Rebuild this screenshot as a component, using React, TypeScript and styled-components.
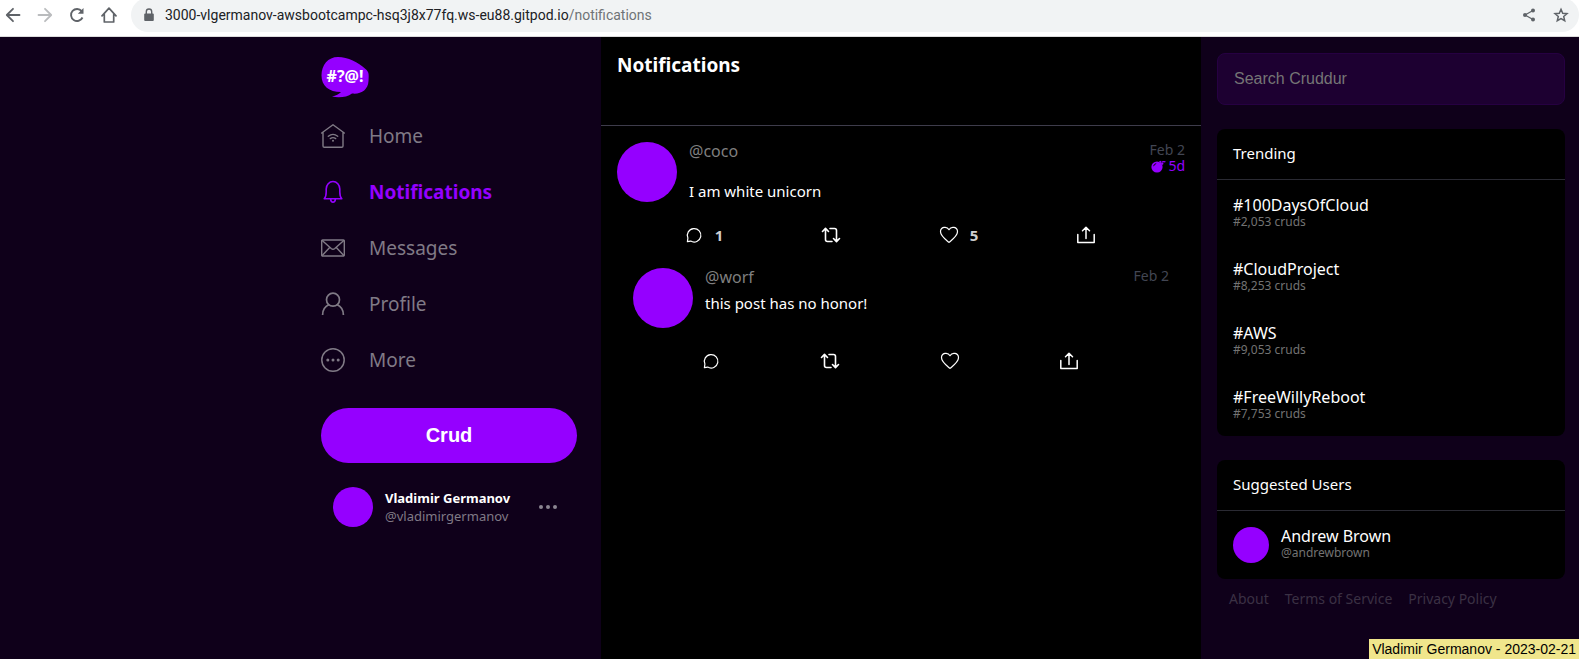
import React from 'react';
import styled, { createGlobalStyle, css } from 'styled-components';

const GlobalStyle = createGlobalStyle`
  * { box-sizing: border-box; }
  html, body, #root { height: 100%; }
  body {
    margin: 0;
    background: #000;
    color: #fff;
    font-family: 'Noto Sans', 'Open Sans', sans-serif;
    font-size: 15px;
  }
  button, input { font-family: 'Liberation Sans', Arial, sans-serif; }
  a { color: inherit; text-decoration: none; }
`;

const purple = '#9500ff';

const Window = styled.div`
  min-height: 100%;
  display: flex;
  flex-direction: column;
`;

/* Browser bar */
const BrowserBar = styled.header`
  display: flex;
  align-items: flex-start;
  height: 37px;
  overflow: hidden;
  background: #fff;
  border-bottom: 1px solid #dcdcdc;
`;

const BrowserButtons = styled.div`
  display: flex;
  align-items: center;
  gap: 16px;
  height: 30px;
  padding: 0 14px 0 5px;
`;

const IconButton = styled.button<{ $color?: string }>`
  display: flex;
  padding: 0;
  border: 0;
  background: none;
  cursor: pointer;
  color: ${p => p.$color ?? '#5f6368'};
`;

const AddressBar = styled.div`
  flex: 1;
  display: flex;
  align-items: center;
  height: 34px;
  margin-top: -2px;
  padding: 0 10px;
  border-radius: 17px;
  background: #f1f3f4;
`;

const Address = styled.div`
  flex: 1;
  padding-left: 8px;
  font-family: Roboto, 'Noto Sans', sans-serif;
  font-size: 14px;
  line-height: 20px;
  color: #202124;
  span { color: #6f7377; }
`;

const AddressActions = styled.div`
  display: flex;
  gap: 16px;
`;

/* Page frame */
const Page = styled.div`
  flex: 1;
  display: grid;
  grid-template-columns: minmax(300px, 1fr) 600px minmax(300px, 378px);
`;

const Sidebar = styled.aside`
  background: #0f001a;
  padding: 0 24px;
  display: flex;
  flex-direction: column;
  align-items: flex-end;
`;

const SidebarInner = styled.div`
  width: 256px;
  padding-top: 20px;
`;

const NavList = styled.nav`
  display: flex;
  flex-direction: column;
  padding-top: 6px;
`;

const NavLink = styled.a<{ $active?: boolean }>`
  display: flex;
  align-items: center;
  gap: 24px;
  height: 56px;
  font-size: 19px;
  color: #807a86;
  ${p => p.$active && css`
    color: ${purple};
    font-weight: 700;
  `}
`;

const CrudButton = styled.button`
  width: 100%;
  height: 55px;
  margin-top: 20px;
  border: 0;
  border-radius: 28px;
  background: ${purple};
  color: #fff;
  font-size: 20px;
  font-weight: 700;
  cursor: pointer;
`;

const Avatar = styled.div<{ $size: number }>`
  flex: none;
  width: ${p => p.$size}px;
  height: ${p => p.$size}px;
  border-radius: 50%;
  background: ${purple};
`;

const Account = styled.div`
  display: flex;
  align-items: center;
  gap: 12px;
  margin-top: 12px;
  padding: 12px 20px 12px 12px;
`;

const AccountText = styled.div`
  flex: 1;
  font-size: 13px;
  line-height: 18px;
  white-space: nowrap;
  color: #807a86;
`;

const AccountName = styled.div`
  font-weight: 700;
  color: #fff;
`;

/* Feed */
const Feed = styled.main`
  background: #000;
`;

const FeedHeader = styled.div`
  height: 89px;
  padding: 16px;
  border-bottom: 1px solid #3e3c4b;
`;

const FeedTitle = styled.h1`
  margin: 0;
  font-size: 19px;
  line-height: 24px;
`;

const Post = styled.article`
  padding: 16px 16px 0;
`;

const Replies = styled.div`
  padding: 7px 16px 0;
`;

const PostBody = styled.div`
  display: flex;
  gap: 12px;
`;

const PostText = styled.div<{ $spaced?: boolean }>`
  flex: 1;
  display: flex;
  flex-direction: column;
  gap: ${p => (p.$spaced ? 22 : 8)}px;
  line-height: 18px;
`;

const Handle = styled.a`
  font-size: 16px;
  color: #7f7f7f;
`;

const PostDates = styled.div`
  font-size: 14px;
  line-height: 16px;
  text-align: right;
  color: #424653;
`;

const Expires = styled.div`
  display: flex;
  align-items: center;
  justify-content: flex-end;
  gap: 2px;
  color: ${purple};
`;

const Actions = styled.div`
  display: flex;
  justify-content: space-around;
  padding: 23px 40px 0 18px;
`;

const Action = styled.button`
  display: flex;
  align-items: center;
  gap: 11px;
  padding: 0;
  border: 0;
  background: none;
  color: #fff;
  cursor: pointer;
  span {
    font: 700 15px/20px 'Noto Sans', sans-serif;
    color: #cfcfcf;
  }
`;

/* Right rail */
const Rail = styled.aside`
  display: flex;
  flex-direction: column;
  padding: 16px 14px 16px 16px;
  background: #0f001a;
`;

const Search = styled.input`
  width: 100%;
  height: 52px;
  padding: 0 16px;
  border: 1px solid #260042;
  border-radius: 8px;
  background: #1d0031;
  color: #fff;
  font-size: 16px;
  &::placeholder { color: #757575; }
`;

const Card = styled.section`
  margin-top: 24px;
  border-radius: 8px;
  background: #000;
`;

const CardTitle = styled.h2`
  margin: 0;
  padding: 14px 16px 16px;
  border-bottom: 1px solid #2a2a33;
  font-size: 15px;
  font-weight: 400;
  line-height: 20px;
`;

const CardItem = styled.a<{ $person?: boolean }>`
  display: flex;
  gap: 12px;
  padding: 16px 16px ${p => (p.$person ? 16 : 14)}px;
`;

const ItemTitle = styled.div`
  font-size: 16px;
  line-height: 18px;
`;

const ItemSub = styled.div`
  font-size: 12px;
  line-height: 16px;
  color: #737373;
`;

const FooterLinks = styled.footer`
  display: flex;
  gap: 16px;
  padding: 10px 12px;
  font-size: 14px;
  line-height: 20px;
  color: #3b3144;
`;

const Stamp = styled.div`
  position: fixed;
  right: 0;
  bottom: 0;
  padding: 0 3px;
  background: #f0e68c;
  color: #000;
  font: 14px/20px 'Liberation Sans', Arial, sans-serif;
`;

type IconProps = { size?: number; box?: string; width?: number; children: React.ReactNode };
const Icon = ({ size = 24, box = '0 0 24 24', width = 1, children }: IconProps) => (
  <svg width={size} height={size} viewBox={box} fill="none" stroke="currentColor" strokeWidth={width}
    strokeLinecap="round" strokeLinejoin="round" aria-hidden="true">{children}</svg>
);

const Logo = () => (
  <svg width="50" height="41" viewBox="0 0 50 41" role="img" aria-label="Cruddur">
    <path fill={purple} d="M17 0C7 0 .5 8 .5 18.500C.5 29 8 35 20 35C18 37 15 38.500 11 39.500C17 41 26 40.500 31 36.500C40 37.500 47 33 47.500 24C48 17 48 15 44.500 12C37 5 27 0 17 0Z" />
    <text x="24" y="25" fill="#fff" fontFamily="'Noto Sans', sans-serif" fontSize="16" fontWeight="700" textAnchor="middle">#?@!</text>
  </svg>
);

const HomeIcon = () => (
  <Icon width={1.4}>
    <path d="M.7 9 12 .8 23.300 9M2 8.200V22q0 1.300 1.300 1.300h17.400q1.300 0 1.300-1.300V8.200" />
    <path d="M7.300 12.200q4.700-3.600 9.400 0M9.300 14.600q2.700-2 5.400 0" />
    <circle cx="12" cy="16.800" r="1" fill="currentColor" stroke="none" />
  </Icon>
);
const BellIcon = () => (
  <Icon width={1.6}>
    <path d="M3.200 18.800C5 17 5.200 15.500 5.200 12V9a6.800 7.500 0 0 1 13.600 0v3c0 3.500.2 5 2 6.800ZM9.600 19.200q.3 3 2.400 3t2.400-3" />
  </Icon>
);
const MailIcon = () => (
  <Icon width={1.4}>
    <rect x=".7" y="4" width="22.600" height="16" rx="1" />
    <path d="m1.200 4.500 9 8q1.800 1.500 3.600 0l9-8M1.200 19.500l7.500-8M22.800 19.500l-7.500-8" />
  </Icon>
);
const ProfileIcon = () => (
  <Icon width={1.7}>
    <circle cx="12" cy="7.700" r="6.500" />
    <path strokeLinecap="butt" d="M1.600 23c0-5 3-8.800 6.400-10.400M22.400 23c0-5-3-8.800-6.400-10.400" />
  </Icon>
);
const MoreIcon = () => (
  <Icon width={1.5}>
    <circle cx="12" cy="12" r="11.200" />
    <g fill="currentColor" stroke="none">
      <circle cx="6.800" cy="12" r="1.500" /><circle cx="12" cy="12" r="1.500" /><circle cx="17.200" cy="12" r="1.500" />
    </g>
  </Icon>
);
const DotsIcon = () => (
  <svg width="18" height="6" viewBox="0 0 18 6" fill="currentColor" aria-hidden="true">
    <circle cx="2" cy="3" r="2" /><circle cx="9" cy="3" r="2" /><circle cx="16" cy="3" r="2" />
  </svg>
);

const CommentIcon = () => (
  <Icon size={20} box="0 0 20 20" width={1.2}>
    <path d="M3.400 16.700 3.900 13A6.800 6.700 0 1 1 6.700 16.100Z" />
  </Icon>
);
const RepostIcon = () => (
  <Icon size={20} box="0 0 20 20" width={1.6}>
    <path d="M1.500 6.500 4.500 3.400l3 3.100M4.500 3.800v10.700q0 2 2 2h4.500M9 3.500h4.500q2 0 2 2v10.700M12.500 13.500l3 3.100 3-3.100" />
  </Icon>
);
const HeartIcon = () => (
  <Icon size={20} box="0 0 20 20" width={1.2}>
    <path d="M10 17.400C7 14.800 1.500 11 1.500 6.800C1.500 1.800 7.800.8 10 4.700C12.200.8 18.500 1.800 18.500 6.800C18.500 11 13 14.800 10 17.400Z" />
  </Icon>
);
const ShareIcon = () => (
  <Icon size={20} box="0 0 20 20" width={1.5}>
    <path d="M1.800 9.500V17.500H18.200V9.500M10 13.500V2.500M6.500 5.700 10 2.200l3.500 3.500" />
  </Icon>
);
const BombIcon = () => (
  <svg width="15" height="13" viewBox="0 0 15 13" aria-hidden="true">
    <circle cx="6" cy="7" r="5.600" fill="currentColor" />
    <path d="m8 1.500 3.500 3.500 1.200-1.200L9.500.8ZM10 2q2-1.800 4.700-.7l-.6 1.200q-1.600-.8-3 .5Z" fill="currentColor" />
    <path d="M2.600 6.200Q3 4 5.200 3.600" stroke="#000" strokeWidth=".9" fill="none" />
  </svg>
);

const nav = [
  { label: 'Home', icon: <HomeIcon /> },
  { label: 'Notifications', icon: <BellIcon />, active: true },
  { label: 'Messages', icon: <MailIcon /> },
  { label: 'Profile', icon: <ProfileIcon /> },
  { label: 'More', icon: <MoreIcon /> },
];

const trends = [
  ['#100DaysOfCloud', '#2,053 cruds'],
  ['#CloudProject', '#8,253 cruds'],
  ['#AWS', '#9,053 cruds'],
  ['#FreeWillyReboot', '#7,753 cruds'],
];

type ActivityProps = {
  handle: string; text: string; date: string; expires?: string; spaced?: boolean; comments?: number; likes?: number;
};
const Activity = ({ handle, text, date, expires, spaced, comments, likes }: ActivityProps) => (
  <Post>
    <PostBody>
      <Avatar $size={60} />
      <PostText $spaced={spaced}>
        <Handle href="#">{handle}</Handle>
        <div>{text}</div>
      </PostText>
      <PostDates>
        <div>{date}</div>
        {expires && <Expires><BombIcon />{expires}</Expires>}
      </PostDates>
    </PostBody>
    <Actions>
      <Action aria-label="Reply"><CommentIcon />{comments && <span>{comments}</span>}</Action>
      <Action aria-label="Repost"><RepostIcon /></Action>
      <Action aria-label="Like"><HeartIcon />{likes && <span>{likes}</span>}</Action>
      <Action aria-label="Share"><ShareIcon /></Action>
    </Actions>
  </Post>
);

export default function App() {
  return (
    <Window>
      <GlobalStyle />
      <BrowserBar>
        <BrowserButtons>
          <IconButton aria-label="Back">
            <Icon size={16} box="0 0 16 16" width={1.8}><path d="M14.500 8H2M8 1.800 1.800 8 8 14.200" /></Icon>
          </IconButton>
          <IconButton aria-label="Forward" $color="#babcbe">
            <Icon size={16} box="0 0 16 16" width={1.8}><path d="M1.500 8H14M8 1.800 14.200 8 8 14.200" /></Icon>
          </IconButton>
          <IconButton aria-label="Reload">
            <Icon size={16} box="0 0 16 16" width={1.900}>
              <path d="M13.500 10.500A6 6 0 1 1 12.700 4.200" strokeLinecap="butt" />
              <path d="M14.500 1v5.700H8.800Z" fill="currentColor" stroke="none" />
            </Icon>
          </IconButton>
          <IconButton aria-label="Home page">
            <Icon size={16} box="0 0 16 16" width={1.700}><path d="M1 8.800 8 1.200 15 8.800M3.300 7.500V15H12.700V7.500" /></Icon>
          </IconButton>
        </BrowserButtons>
        <AddressBar>
          <Icon size={16} box="0 0 16 16" width={1.400}>
            <rect x="3.200" y="6.500" width="9.600" height="7.500" rx="1" fill="#5f6368" stroke="none" />
            <path d="M5.300 7V4.700a2.700 2.700 0 0 1 5.400 0V7" stroke="#5f6368" />
          </Icon>
          <Address>3000-vlgermanov-awsbootcampc-hsq3j8x77fq.ws-eu88.gitpod.io<span>/notifications</span></Address>
          <AddressActions>
            <IconButton aria-label="Share page">
              <Icon size={16} box="0 0 16 16" width={1.300}>
                <path d="M12 3.500 4 8l8 4.500" />
                <g fill="currentColor" stroke="none"><circle cx="12" cy="3.500" r="2" /><circle cx="4" cy="8" r="2" /><circle cx="12" cy="12.500" r="2" /></g>
              </Icon>
            </IconButton>
            <IconButton aria-label="Bookmark">
              <Icon size={16} box="0 0 16 16" width={1.500}>
                <path strokeLinejoin="miter" d="m8 2.300 1.700 4 4.300.4-3.300 2.800 1 4.200L8 11.500l-3.700 2.200 1-4.200L2 6.700l4.300-.4Z" />
              </Icon>
            </IconButton>
          </AddressActions>
        </AddressBar>
      </BrowserBar>

      <Page>
        <Sidebar>
          <SidebarInner>
            <Logo />
            <NavList>
              {nav.map(n => <NavLink key={n.label} href="#" $active={n.active}>{n.icon}{n.label}</NavLink>)}
            </NavList>
            <CrudButton>Crud</CrudButton>
            <Account>
              <Avatar $size={40} />
              <AccountText>
                <AccountName>Vladimir Germanov</AccountName>
                @vladimirgermanov
              </AccountText>
              <IconButton aria-label="Account menu" $color="#8b8591"><DotsIcon /></IconButton>
            </Account>
          </SidebarInner>
        </Sidebar>

        <Feed>
          <FeedHeader><FeedTitle>Notifications</FeedTitle></FeedHeader>
          <Activity handle="@coco" text="I am white unicorn" date="Feb 2" expires="5d" spaced comments={1} likes={5} />
          <Replies>
            <Activity handle="@worf" text="this post has no honor!" date="Feb 2" />
          </Replies>
        </Feed>

        <Rail>
          <Search type="text" placeholder="Search Cruddur" aria-label="Search Cruddur" />
          <Card>
            <CardTitle>Trending</CardTitle>
            {trends.map(([tag, count]) => (
              <CardItem key={tag} href="#">
                <div><ItemTitle>{tag}</ItemTitle><ItemSub>{count}</ItemSub></div>
              </CardItem>
            ))}
          </Card>
          <Card>
            <CardTitle>Suggested Users</CardTitle>
            <CardItem href="#" $person>
              <Avatar $size={36} />
              <div><ItemTitle>Andrew Brown</ItemTitle><ItemSub>@andrewbrown</ItemSub></div>
            </CardItem>
          </Card>
          <FooterLinks>
            <a href="#">About</a>
            <a href="#">Terms of Service</a>
            <a href="#">Privacy Policy</a>
          </FooterLinks>
        </Rail>
      </Page>
      <Stamp>Vladimir Germanov - 2023-02-21</Stamp>
    </Window>
  );
}
